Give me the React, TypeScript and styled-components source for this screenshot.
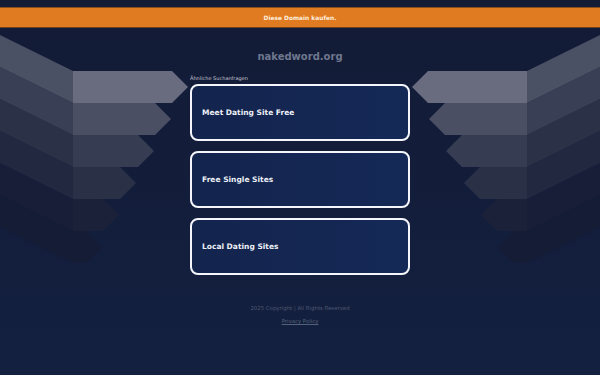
import React from 'react';
import styled, { createGlobalStyle } from 'styled-components';

const GlobalStyle = createGlobalStyle`
    html, body {
        margin: 0;
        padding: 0;
        background: #131b36;
    }
    body {
        font-family: "DejaVu Sans", "Liberation Sans", sans-serif;
    }
`;

const Page = styled.div`
    position: relative;
    width: 600px;
    height: 375px;
    overflow: hidden;
    background: linear-gradient(180deg, #131b35 0%, #131e3c 60%, #13203f 100%);
    padding-top: 7px;
    box-sizing: border-box;
`;

const Decoration = styled.svg`
    position: absolute;
    left: 0;
    top: 0;
    width: 600px;
    height: 375px;
    pointer-events: none;
`;

const Banner = styled.a`
    position: relative;
    display: flex;
    align-items: center;
    justify-content: center;
    height: 19px;
    background: #e17b21;
    border-top: 1px solid #8a4d1d;
    border-bottom: 1px solid #6b3f1e;
    color: #fdeede;
    font-size: 5.9px;
    font-weight: bold;
    text-decoration: none;
`;

const Content = styled.main`
    position: relative;
    width: 220px;
    margin: 0 auto;
    display: flex;
    flex-direction: column;
`;

const Domain = styled.h1`
    margin: 23px 0 0;
    font-size: 10px;
    line-height: 12px;
    font-weight: bold;
    text-align: center;
    color: #6e778e;
`;

const Label = styled.div`
    margin-top: 12px;
    font-size: 5px;
    line-height: 6px;
    color: #c3c7d2;
`;

const List = styled.div`
    margin-top: 3px;
    display: flex;
    flex-direction: column;
    gap: 10px;
`;

const Item = styled.a`
    display: flex;
    align-items: center;
    height: 53px;
    padding: 0 10px;
    border: 2px solid #f4f6fb;
    border-radius: 8px;
    background: linear-gradient(90deg, #13244d 0%, #152957 100%);
    color: #edf0f6;
    font-size: 7.5px;
    font-weight: bold;
    text-decoration: none;
`;

const Footer = styled.footer`
    position: relative;
    margin-top: 30px;
    display: flex;
    flex-direction: column;
    align-items: center;
    gap: 7px;
    font-size: 5.4px;
    line-height: 6px;
    color: #4d5671;
`;

const FooterLink = styled.a`
    color: #56607b;
    text-decoration: underline;
`;

interface Layer {
    y: number;
    end: number;
    front: string;
    side: string;
}

const layers: Layer[] = [
    { y: 71, end: 172, front: '#686c7e', side: '#4b5165' },
    { y: 103, end: 155, front: '#4a4f63', side: '#393f54' },
    { y: 135, end: 138, front: '#363c51', side: '#2b3147' },
    { y: 167, end: 120, front: '#2a3046', side: '#222840' },
    { y: 199, end: 103, front: '#1b2139', side: '#181e37' },
    { y: 231, end: 86, front: '#151c36', side: '#151c36' },
];

const Arrows: React.FC<{ mirror?: boolean }> = ({ mirror }) => (
    <g transform={mirror ? 'translate(600 0) scale(-1 1)' : undefined}>
        {layers.slice().reverse().map((l) => (
            <g key={l.y}>
                <polygon points={`0,${l.y - 36} 73,${l.y} 73,${l.y + 32} 0,${l.y - 4}`} fill={l.side} />
                <polygon
                    points={`73,${l.y} ${l.end},${l.y} ${l.end + 16},${l.y + 16} ${l.end},${l.y + 32} 73,${l.y + 32}`}
                    fill={l.front}
                />
            </g>
        ))}
    </g>
);

const searches = ['Meet Dating Site Free', 'Free Single Sites', 'Local Dating Sites'];

const App: React.FC = () => {
    return (
        <Page>
            <GlobalStyle />
            <Decoration viewBox="0 0 600 375">
                <Arrows />
                <Arrows mirror />
            </Decoration>
            <Banner href="#">Diese Domain kaufen.</Banner>
            <Content>
                <Domain>nakedword.org</Domain>
                <Label>Ähnliche Suchanfragen</Label>
                <List>
                    {searches.map((s) => (
                        <Item key={s} href="#">{s}</Item>
                    ))}
                </List>
            </Content>
            <Footer>
                <span>2025 Copyright | All Rights Reserved</span>
                <FooterLink href="#">Privacy Policy</FooterLink>
            </Footer>
        </Page>
    );
};

export default App;
